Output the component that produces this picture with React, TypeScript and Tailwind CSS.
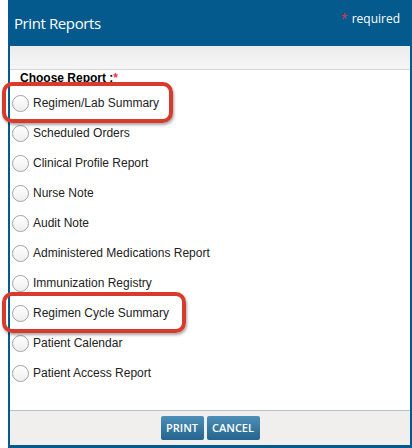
import React from 'react';

const REPORTS = [
  'Regimen/Lab Summary',
  'Scheduled Orders',
  'Clinical Profile Report',
  'Nurse Note',
  'Audit Note',
  'Administered Medications Report',
  'Immunization Registry',
  'Regimen Cycle Summary',
  'Patient Calendar',
  'Patient Access Report',
];

// radio circle like the old IE style
const Radio: React.FC = () => (
  <span className="block w-[17px] h-[17px] rounded-full border border-[#a3a3a3] bg-gradient-to-b from-white to-[#eeeeee] shrink-0" />
);

export default function App() {
  return (
    <div className="relative w-[412px] h-[448px] bg-white overflow-hidden font-['Liberation_Sans',Arial,sans-serif]">
      <div className="ml-[8px] w-[405px] h-[448px] flex flex-col border-l-2 border-r-[3px] border-b-[3px] border-[#045a8c]">
        {/* header */}
        <div className="h-[46px] bg-[#045a8c] flex items-start justify-between pl-[4px] pr-[10px] shrink-0">
          <span className="mt-[12px] text-white text-[15px] font-['Open_Sans',sans-serif] tracking-[-0.4px]">Print Reports</span>
          <span className="mt-[10px] text-white text-[12px] font-['Open_Sans',sans-serif]">
            <span className="text-[#e8304e] align-top text-[12px] mr-[4px]">*</span>required
          </span>
        </div>
        <div className="h-[24px] bg-gradient-to-b from-[#ececec] to-[#f6f6f6] border-b border-[#d6d6d6] shrink-0" />

        {/* body */}
        <div className="flex-1 bg-white">
          <div className="h-[18px] pl-[10px] pt-[1px] text-[12px] font-bold text-black leading-[14px]">
            Choose Report :<span className="text-[#e8304e]">*</span>
          </div>
          {REPORTS.map((r) => (
            <div key={r} className="h-[30px] flex items-center gap-[4px] pl-[2px]">
              <Radio />
              <span className="text-[12px] text-[#222]">{r}</span>
            </div>
          ))}
        </div>

        {/* footer */}
        <div className="h-[35px] bg-[#f0efee] border-t border-[#b4c3cc] flex items-center justify-center gap-[3px] shrink-0">
          <button className="h-[24px] w-[43px] rounded-[2px] bg-gradient-to-b from-[#4d8fb5] to-[#23658f] text-white text-[11px] font-semibold font-['Open_Sans',sans-serif]">
            PRINT
          </button>
          <button className="h-[24px] w-[53px] rounded-[2px] bg-gradient-to-b from-[#4d8fb5] to-[#23658f] text-white text-[11px] font-semibold font-['Open_Sans',sans-serif]">
            CANCEL
          </button>
        </div>
      </div>

      {/* annotation boxes */}
      <div className="absolute left-[2px] top-[82px] w-[171px] h-[41px] border-[4px] border-[#d83b2b] rounded-[10px] shadow-[1px_2px_3px_rgba(0,0,0,0.35)]" />
      <div className="absolute left-[2px] top-[292px] w-[184px] h-[41px] border-[4px] border-[#d83b2b] rounded-[10px] shadow-[1px_2px_3px_rgba(0,0,0,0.35)]" />
    </div>
  );
}
